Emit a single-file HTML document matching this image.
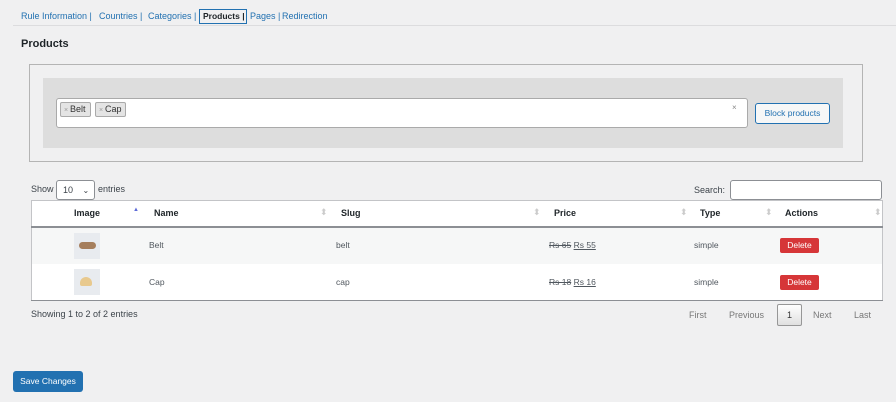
<!DOCTYPE html>
<html><head><style>
*{box-sizing:border-box;margin:0;padding:0}
body{width:896px;height:402px;background:#f0f0f1;font-family:"Liberation Sans",sans-serif;font-size:9px;color:#3c434a;position:relative;overflow:hidden}
.a{position:absolute}
.nv{position:absolute;top:11px;color:#2271b1;font-size:9px;white-space:nowrap}
.sort{position:absolute;color:#ccc;font-size:9px;line-height:9px}
.hd{position:absolute;top:208px;font-weight:bold;color:#1d2327;font-size:9px}
.del{position:absolute;left:780px;width:39px;height:15px;background:#d63638;color:#fff;border-radius:2px;font-size:8.5px;text-align:center;line-height:15px}
.cell{position:absolute;font-size:8.5px;color:#50575e}
.thumb{position:absolute;left:74px;width:26px;height:26px;background:#e8ebef}
.tag{position:absolute;top:102px;height:15px;background:#e4e4e4;border:1px solid #aaa;border-radius:2px;font-size:9px;line-height:13px;padding-left:3px;color:#333}
</style></head><body>
<div class="nv" style="left:21px">Rule Information |</div>
<div class="nv" style="left:99px">Countries |</div>
<div class="nv" style="left:148px">Categories |</div>
<div class="a" style="left:199px;top:9px;width:48px;height:15px;border:1px solid #2271b1;font-weight:bold;color:#1d2327;font-size:8.5px;line-height:13px;padding-left:3px">Products |</div>
<div class="nv" style="left:250px">Pages |</div>
<div class="nv" style="left:282px">Redirection</div>
<div class="a" style="left:13px;top:25px;width:883px;height:1px;background:#dcdcde"></div>
<div class="a" style="left:21px;top:38px;font-size:11px;font-weight:bold;color:#1d2327">Products</div>
<div class="a" style="left:29px;top:64px;width:834px;height:98px;border:1px solid #b4b4b4"></div>
<div class="a" style="left:43px;top:78px;width:800px;height:70px;background:#dddddd"></div>
<div class="a" style="left:56px;top:98px;width:692px;height:30px;background:#fff;border:1px solid #aaa;border-radius:3px"></div>
<div class="tag" style="left:60px;width:31px"><span style="color:#999;font-size:7px">× </span>Belt</div>
<div class="tag" style="left:95px;width:31px"><span style="color:#999;font-size:7px">× </span>Cap</div>
<div class="a" style="left:732px;top:103px;color:#888;font-size:8px">×</div>
<div class="a" style="left:755px;top:103px;width:75px;height:21px;background:#f6f7f7;border:1px solid #2271b1;border-radius:3px;color:#2271b1;font-size:8.5px;line-height:19px;text-align:center">Block products</div>
<div class="a" style="left:31px;top:184px">Show</div>
<div class="a" style="left:56px;top:180px;width:39px;height:20px;background:#fff;border:1px solid #8c8f94;border-radius:3px;padding-left:6px;line-height:18px">10 <span style="margin-left:7px;font-size:8px">⌄</span></div>
<div class="a" style="left:98px;top:184px">entries</div>
<div class="a" style="left:694px;top:185px">Search:</div>
<div class="a" style="left:730px;top:180px;width:152px;height:20px;background:#fff;border:1px solid #8c8f94;border-radius:3px"></div>
<div class="a" style="left:31px;top:200px;width:852px;height:101px;background:#fff;border:1px solid #c3c4c7"></div>
<div class="a" style="left:31px;top:226px;width:852px;height:2px;background:#8c8f94"></div>
<div class="a" style="left:32px;top:228px;width:850px;height:36px;background:#f6f7f7"></div>
<div class="a" style="left:31px;top:300px;width:852px;height:1px;background:#8c8f94"></div>
<div class="hd" style="left:74px">Image</div><div class="a" style="left:133px;top:207px;color:#5d6bd8;font-size:6px">▲</div>
<div class="hd" style="left:154px">Name</div><div class="sort" style="left:320px;top:208px">⬍</div>
<div class="hd" style="left:341px">Slug</div><div class="sort" style="left:533px;top:208px">⬍</div>
<div class="hd" style="left:554px">Price</div><div class="sort" style="left:680px;top:208px">⬍</div>
<div class="hd" style="left:700px">Type</div><div class="sort" style="left:765px;top:208px">⬍</div>
<div class="hd" style="left:785px">Actions</div><div class="sort" style="left:874px;top:208px">⬍</div>
<div class="thumb" style="top:233px"><div class="a" style="left:5px;top:9px;width:17px;height:7px;background:#a57e5c;border-radius:4px"></div></div>
<div class="thumb" style="top:269px"><div class="a" style="left:6px;top:8px;width:12px;height:9px;background:#e8c98e;border-radius:6px 6px 2px 2px"></div></div>
<div class="cell" style="left:149px;top:240px">Belt</div>
<div class="cell" style="left:336px;top:240px">belt</div>
<div class="cell" style="left:549px;top:240px"><s>Rs 65</s> <u>Rs 55</u></div>
<div class="cell" style="left:694px;top:240px">simple</div>
<div class="del" style="top:238px">Delete</div>
<div class="cell" style="left:149px;top:277px">Cap</div>
<div class="cell" style="left:336px;top:277px">cap</div>
<div class="cell" style="left:549px;top:277px"><s>Rs 18</s> <u>Rs 16</u></div>
<div class="cell" style="left:694px;top:277px">simple</div>
<div class="del" style="top:275px">Delete</div>
<div class="a" style="left:31px;top:309px">Showing 1 to 2 of 2 entries</div>
<div class="a" style="left:689px;top:310px;color:#777">First</div>
<div class="a" style="left:729px;top:310px;color:#777">Previous</div>
<div class="a" style="left:777px;top:304px;width:25px;height:22px;background:linear-gradient(#fff,#e0e0e0);border:1px solid #979797;border-radius:2px;text-align:center;line-height:20px;color:#333">1</div>
<div class="a" style="left:813px;top:310px;color:#777">Next</div>
<div class="a" style="left:854px;top:310px;color:#777">Last</div>
<div class="a" style="left:13px;top:371px;width:70px;height:21px;background:#2271b1;border-radius:3px;color:#fff;font-size:8.5px;text-align:center;line-height:21px">Save Changes</div>
</body></html>
